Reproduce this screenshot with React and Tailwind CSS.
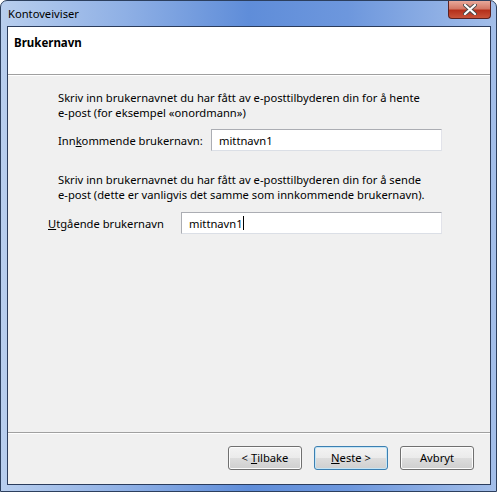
import React from "react";

const font = { fontFamily: '"Noto Sans", "Open Sans", sans-serif' };

const WinButton = ({ children, focused }) => (
  <button
    className={
      "w-[74px] h-[24px] rounded-[3px] border text-[11.2px] text-black flex items-center justify-center whitespace-nowrap bg-[linear-gradient(to_bottom,#f3f3f3_0%,#ebebeb_48%,#dddddd_50%,#cfcfcf_100%)] " +
      (focused
        ? "border-[#3c7fb1] shadow-[inset_0_0_0_1px_#c4e5f6]"
        : "border-[#707070] shadow-[inset_0_0_0_1px_#fcfcfc]")
    }
  >
    {children}
  </button>
);

const TextBox = ({ value, width, caret }) => (
  <div
    className={`${width} h-[22px] bg-white border border-[#abadb3] border-b-[#dbdfe6] border-r-[#e2e3ea] flex items-center pl-[7px] text-[11.2px] text-black`}
  >
    {value}
    {caret && <span className="inline-block w-px h-[14px] bg-black" />}
  </div>
);

export default function App() {
  return (
    <div style={font} className="w-[497px] h-[492px] overflow-hidden">
      <div className="w-full h-full flex flex-col rounded-t-[7px] border border-[#2c3f5e] bg-[linear-gradient(to_right,#b8ceee_0%,#8fb0e5_25%,#5f8dd9_50%,#6d97dd_70%,#a3bee9_100%)]">
        {/* title bar */}
        <div className="h-[25px] flex items-start justify-between shrink-0">
          <div className="pl-[7px] pt-[5px] text-[11.2px] leading-[15px] text-black">
            Kontoveiviser
          </div>
          <div className="mr-[5px] w-[43px] h-[18px] rounded-b-[4px] border border-t-0 border-[#5a2222] bg-[linear-gradient(to_bottom,#e8a89a_0%,#d37866_45%,#b5301b_55%,#c8533a_100%)] flex items-center justify-center">
            <svg width="14" height="11" viewBox="0 0 14 11">
              <path
                d="M2 1 L12 10 M12 1 L2 10"
                stroke="#4a4a4a"
                strokeWidth="4"
                strokeLinecap="round"
              />
              <path
                d="M2 1 L12 10 M12 1 L2 10"
                stroke="#ffffff"
                strokeWidth="2.2"
                strokeLinecap="round"
              />
            </svg>
          </div>
        </div>

        {/* client area */}
        <div className="flex-1 ml-[6px] mr-[5px] mb-[6px] border border-[#2b3c5c] bg-[#f0f0f0] flex flex-col">
          <div className="h-[47px] bg-white shrink-0 pl-[6px] pt-[8px] text-[11.5px] leading-[15px] font-bold text-black">
            Brukernavn
          </div>
          <div className="h-px bg-[#a0a0a0] shrink-0" />
          <div className="h-px bg-white shrink-0" />

          <div className="flex-1 pl-[40px] pt-[14px] text-[11.2px] leading-[15px] text-black whitespace-nowrap">
            <p className="pl-[10px]">
              Skriv inn brukernavnet du har fått av e-posttilbyderen din for å hente
              <br />
              e-post (for eksempel «onordmann»)
            </p>
            <div className="flex items-center mt-[9px] pl-[10px]">
              <span className="w-[153px]">
                Inn<span className="underline">k</span>ommende brukernavn:
              </span>
              <TextBox value="mittnavn1" width="w-[231px]" />
            </div>

            <p className="pl-[10px] mt-[21px]">
              Skriv inn brukernavnet du har fått av e-posttilbyderen din for å sende
              <br />
              e-post (dette er vanligvis det samme som innkommende brukernavn).
            </p>
            <div className="flex items-center mt-[10px]">
              <span className="w-[133px]">
                <span className="underline">U</span>tgående brukernavn
              </span>
              <TextBox value="mittnavn1" width="w-[261px]" caret />
            </div>
          </div>

          <div className="h-px bg-[#a0a0a0] shrink-0" />
          <div className="h-px bg-white shrink-0" />
          <div className="flex justify-end gap-[12px] pr-[16px] pt-[12px] pb-[14px] shrink-0">
            <WinButton>
              &lt;&nbsp;<span className="underline">T</span>ilbake
            </WinButton>
            <WinButton focused>
              <span className="underline">N</span>este&nbsp;&gt;
            </WinButton>
            <WinButton>Avbryt</WinButton>
          </div>
        </div>
      </div>
    </div>
  );
}
